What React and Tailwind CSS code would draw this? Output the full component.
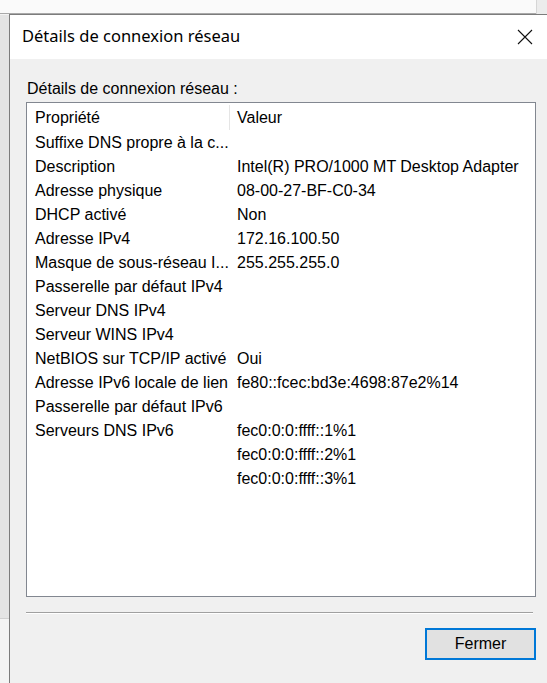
import React from 'react';

const ROWS = [
  ['Suffixe DNS propre à la c...', ''],
  ['Description', 'Intel(R) PRO/1000 MT Desktop Adapter'],
  ['Adresse physique', '08-00-27-BF-C0-34'],
  ['DHCP activé', 'Non'],
  ['Adresse IPv4', '172.16.100.50'],
  ['Masque de sous-réseau I...', '255.255.255.0'],
  ['Passerelle par défaut IPv4', ''],
  ['Serveur DNS IPv4', ''],
  ['Serveur WINS IPv4', ''],
  ['NetBIOS sur TCP/IP activé', 'Oui'],
  ['Adresse IPv6 locale de lien', 'fe80::fcec:bd3e:4698:87e2%14'],
  ['Passerelle par défaut IPv6', ''],
  ['Serveurs DNS IPv6', 'fec0:0:0:ffff::1%1'],
  ['', 'fec0:0:0:ffff::2%1'],
  ['', 'fec0:0:0:ffff::3%1'],
];

const sans = "font-['Liberation_Sans',Arial,sans-serif]";

function CloseIcon() {
  return (
    <svg width="16" height="16" viewBox="0 0 16 16" className="block">
      <path d="M1 1 L15 15 M15 1 L1 15" stroke="#111" strokeWidth="1.1" fill="none" />
    </svg>
  );
}

export default function App() {
  return (
    <div className={`relative w-[547px] h-[683px] overflow-hidden bg-[#f4f4f4] text-black ${sans}`}>
      {/* window behind */}
      <div className="absolute left-0 top-0 w-[547px] h-[14px] bg-[#fafafa] border-b border-[#a9a9a9]">
        <div className="absolute right-0 top-0 w-[11px] h-[14px] bg-[#ececec] border-l border-[#d6d6d6]" />
      </div>
      <div className="absolute left-0 top-[15px] w-[9px] h-[604px] bg-[#e4e4e4] border-b border-[#d0d0d0]" />

      {/* dialog */}
      <div className="absolute left-[9px] top-[14px] w-[560px] h-[700px] border-l border-t border-[#7c7c7c] bg-[#f0f0f0] flex flex-col">
        <div className="h-[44px] bg-white flex items-center justify-between pl-[12px] pr-[36px]">
          <span className="font-['Noto_Sans',sans-serif] text-[16.5px] leading-none pb-[1px]">
            Détails de connexion réseau
          </span>
          <CloseIcon />
        </div>

        <div className="pl-[16px] pt-[20px] flex flex-col">
          <div className="text-[16px] leading-[20px] pl-px">Détails de connexion réseau :</div>

          <div className="mt-[3px] w-[510px] h-[495px] border border-[#828790] bg-white pt-px">
            <div className="flex h-[27px] items-center text-[16px]">
              <div className="w-[202px] pl-[8px]">Propriété</div>
              <div className="w-px h-[25px] bg-[#e5e5e5]" />
              <div className="pl-[7px]">Valeur</div>
            </div>
            {ROWS.map(([k, v], i) => (
              <div key={i} className="flex h-[24px] items-center text-[16px] whitespace-nowrap">
                <div className="w-[203px] pl-[8px] overflow-hidden">{k}</div>
                <div className="pl-[7px]">{v}</div>
              </div>
            ))}
          </div>

          <div className="mt-[15px] w-[507px] h-[2px] border-t border-[#a0a0a0] border-b border-b-white" />

          <div className="w-[510px] mt-[14px] flex justify-end">
            <button className="w-[111px] h-[32px] border-2 border-[#0078d7] bg-[#e1e1e1] text-[16px] leading-none">
              Fermer
            </button>
          </div>
        </div>
      </div>
    </div>
  );
}
